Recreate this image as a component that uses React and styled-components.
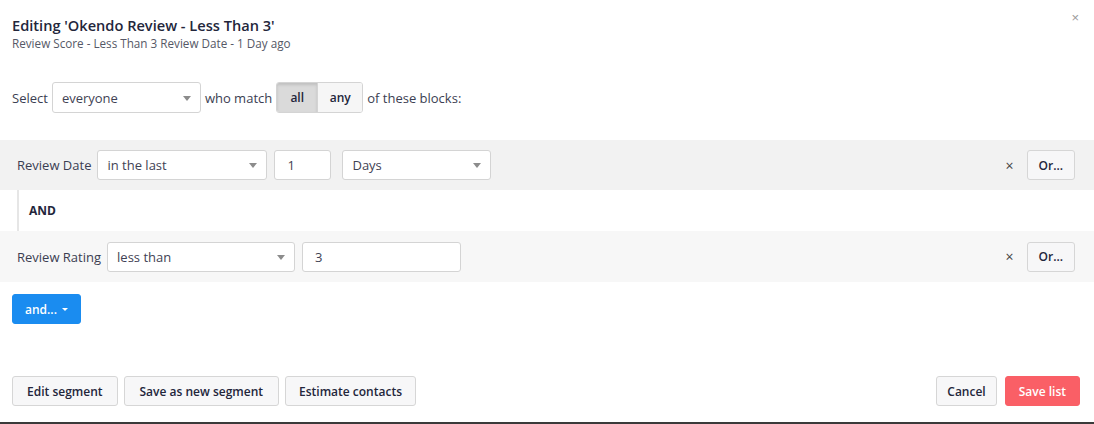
import React from "react";
import styled, { createGlobalStyle } from "styled-components";

const GlobalStyle = createGlobalStyle`
  html, body { margin: 0; padding: 0; background: #fff; }
  body { font-family: "Open Sans", "Noto Sans", sans-serif; color: #23263b; }
  * { box-sizing: border-box; }
`;

const Modal = styled.div`
  position: relative;
  width: 1094px;
  height: 424px;
  display: flex;
  flex-direction: column;
  border-bottom: 2px solid #3a3a3a;
  background: #fff;
`;

const Header = styled.div`
  padding: 14px 12px 0;
`;

const Title = styled.h1`
  margin: 0;
  font-size: 14.6px;
  line-height: 22px;
  font-weight: 600;
  color: #23263b;
`;

const Subtitle = styled.div`
  font-size: 11.7px;
  line-height: 14px;
  color: #555866;
`;

const Close = styled.button`
  position: absolute;
  top: 10px;
  right: 15px;
  border: 0;
  background: none;
  color: #9a9a9a;
  font-size: 13px;
  line-height: 16px;
  padding: 0;
  cursor: pointer;
`;

const MatchRow = styled.div`
  display: flex;
  align-items: center;
  gap: 4px;
  padding: 0 12px;
  margin-top: 32px;
  font-size: 13px;
  color: #3b3e52;
`;

const SelectBox = styled.div`
  position: relative;
  width: ${(p) => p.$w}px;
  height: ${(p) => p.$h || 30}px;
  margin-left: ${(p) => p.$ml || 0}px;
  background: #fff;
  border: 1px solid #d4d4d4;
  border-radius: 3px;
  display: flex;
  align-items: center;
  padding-left: 9px;
  font-size: 13px;
  color: #3f4254;
  &::after {
    content: "";
    position: absolute;
    right: 9px;
    top: 50%;
    margin-top: -2px;
    border-left: 4px solid transparent;
    border-right: 4px solid transparent;
    border-top: 5px solid #8c8c8c;
  }
`;

const InputBox = styled.div`
  width: ${(p) => p.$w}px;
  height: 30px;
  margin-left: ${(p) => p.$ml || 0}px;
  background: #fff;
  border: 1px solid #d4d4d4;
  border-radius: 3px;
  display: flex;
  align-items: center;
  padding-left: 12px;
  font-size: 13px;
  color: #3f4254;
`;

const Toggle = styled.div`
  display: flex;
  height: 31px;
  border: 1px solid #d4d4d4;
  border-radius: 3px;
  overflow: hidden;
`;

const ToggleBtn = styled.div`
  width: ${(p) => p.$w}px;
  display: flex;
  align-items: center;
  justify-content: center;
  font-size: 12px;
  font-weight: 600;
  color: #23263b;
  background: ${(p) => (p.$active ? "#dadada" : "#f6f6f6")};
  box-shadow: ${(p) => (p.$active ? "inset 0 2px 3px rgba(0,0,0,0.12)" : "none")};
  & + & { border-left: 1px solid #d4d4d4; }
`;

const Blocks = styled.div`
  margin-top: 27px;
  display: flex;
  flex-direction: column;
`;

const Block = styled.div`
  height: ${(p) => p.$h}px;
  background: ${(p) => p.$bg};
  display: flex;
  align-items: center;
  padding: 0 19px 0 17px;
`;

const Label = styled.span`
  font-size: 13px;
  color: #3b3e52;
  margin-right: 6px;
`;

const Spacer = styled.div`
  flex: 1;
`;

const Remove = styled.span`
  font-size: 14px;
  color: #444;
  margin-right: 13px;
`;

const Button = styled.button`
  height: ${(p) => p.$h || 30}px;
  padding: 0 ${(p) => p.$px || 12}px;
  margin: 0;
  border: 1px solid ${(p) => (p.$variant === "danger" ? "#f95f66" : p.$variant === "primary" ? "#1a8cf0" : "#d6d6d6")};
  border-radius: 3px;
  background: ${(p) => (p.$variant === "danger" ? "#fa5f66" : p.$variant === "primary" ? "#1a8cf0" : "#f7f7f8")};
  color: ${(p) => (p.$variant ? "#fff" : "#23263b")};
  font-family: inherit;
  font-size: 12px;
  font-weight: 600;
  display: inline-flex;
  align-items: center;
  gap: 3px;
  white-space: nowrap;
`;

const Caret = styled.span`
  border-left: 3px solid transparent;
  border-right: 3px solid transparent;
  border-top: 3px solid #fff;
  margin-left: 2px;
`;

const AndConnector = styled.div`
  height: 41px;
  margin-left: 17px;
  border-left: 2px solid #e6e6e6;
  display: flex;
  align-items: center;
  padding-left: 10px;
  font-size: 12px;
  font-weight: 700;
  color: #23263b;
`;

const AddRow = styled.div`
  padding: 12px 12px 0;
`;

const Footer = styled.div`
  margin-top: auto;
  padding: 0 14px 16px 12px;
  display: flex;
  align-items: center;
`;

const Group = styled.div`
  display: flex;
  gap: ${(p) => p.$gap}px;
`;

export default function App() {
  return (
    <>
      <GlobalStyle />
      <Modal>
        <Header>
          <Title>Editing 'Okendo Review - Less Than 3'</Title>
          <Subtitle>Review Score - Less Than 3 Review Date - 1 Day ago</Subtitle>
        </Header>
        <Close aria-label="close">×</Close>

        <MatchRow>
          <span>Select</span>
          <SelectBox $w={149} $h={31}>everyone</SelectBox>
          <span>who match</span>
          <Toggle>
            <ToggleBtn $w={40} $active>all</ToggleBtn>
            <ToggleBtn $w={45}>any</ToggleBtn>
          </Toggle>
          <span>of these blocks:</span>
        </MatchRow>

        <Blocks>
          <Block $h={50} $bg="#f2f2f2">
            <Label>Review Date</Label>
            <SelectBox $w={170}>in the last</SelectBox>
            <InputBox $w={57} $ml={7}>1</InputBox>
            <SelectBox $w={149} $ml={11}>Days</SelectBox>
            <Spacer />
            <Remove>×</Remove>
            <Button $px={11}>Or...</Button>
          </Block>
          <AndConnector>AND</AndConnector>
          <Block $h={51} $bg="#f7f7f7">
            <Label>Review Rating</Label>
            <SelectBox $w={188}>less than</SelectBox>
            <InputBox $w={159} $ml={7}>3</InputBox>
            <Spacer />
            <Remove>×</Remove>
            <Button $px={11}>Or...</Button>
          </Block>
        </Blocks>

        <AddRow>
          <Button $variant="primary" $px={12}>
            and...<Caret />
          </Button>
        </AddRow>

        <Footer>
          <Group $gap={6}>
            <Button $px={14}>Edit segment</Button>
            <Button $px={15}>Save as new segment</Button>
            <Button $px={13}>Estimate contacts</Button>
          </Group>
          <Spacer />
          <Group $gap={8}>
            <Button $px={10}>Cancel</Button>
            <Button $variant="danger" $px={13}>Save list</Button>
          </Group>
        </Footer>
      </Modal>
    </>
  );
}
